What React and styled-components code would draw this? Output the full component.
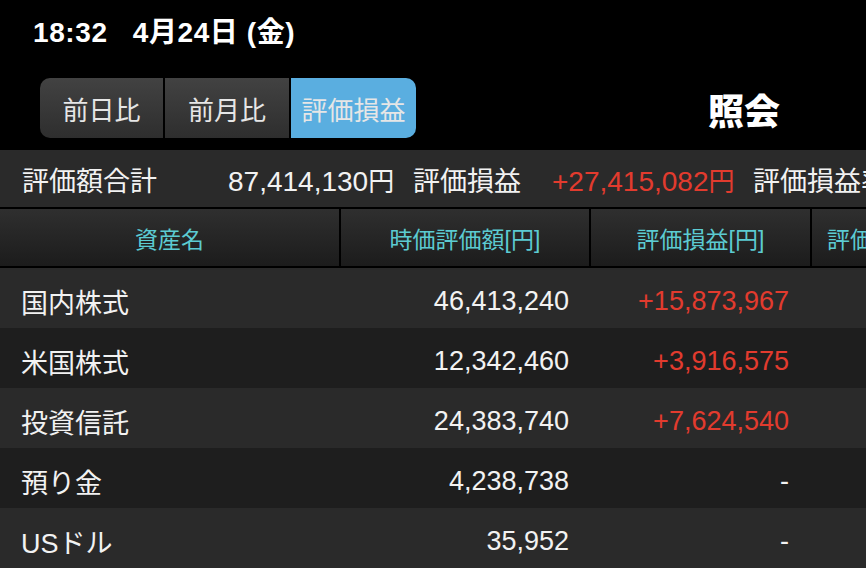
import React from 'react';
import styled, { createGlobalStyle } from 'styled-components';

const GlobalStyle = createGlobalStyle`
  html, body {
    margin: 0;
    padding: 0;
    background: #000;
  }
  body {
    font-family: "Liberation Sans", "Noto Sans CJK JP", sans-serif;
    width: 866px;
    height: 568px;
    overflow: hidden;
  }
`;

const Screen = styled.div`
  width: 866px;
  height: 568px;
  background: #000;
  overflow: hidden;
  display: flex;
  flex-direction: column;
`;

const TopBar = styled.div`
  height: 150px;
  box-sizing: border-box;
  padding: 15px 0 0 33px;
  display: flex;
  flex-direction: column;
`;

const Clock = styled.div`
  color: #fff;
  font-weight: bold;
  font-size: 28px;
  line-height: 36px;
  letter-spacing: 0.6px;
  white-space: pre;
`;

const NavRow = styled.div`
  display: flex;
  align-items: center;
  margin-top: 27px;
  margin-left: 7px;
`;

const Segmented = styled.div`
  display: flex;
  height: 60px;
  border-radius: 10px;
  overflow: hidden;
  gap: 2px;
  background: #000;
`;

const Segment = styled.div`
  width: ${({ $w }) => $w}px;
  display: flex;
  align-items: center;
  justify-content: center;
  font-family: "Noto Sans CJK JP", sans-serif;
  font-size: 26px;
  color: #e6e6e6;
  background: ${({ $active }) =>
    $active ? '#5aaee0' : 'linear-gradient(#424242, #2e2e2e)'};
`;

const Title = styled.div`
  margin-left: auto;
  margin-right: 86px;
  color: #fff;
  font-family: "Noto Sans CJK JP", sans-serif;
  font-weight: 900;
  font-size: 36px;
  line-height: 44px;
  padding-top: 2px;
`;

const Summary = styled.div`
  height: 58px;
  margin-top: 2px;
  background: #2a2a2a;
  display: flex;
  align-items: center;
  white-space: nowrap;
  font-size: 28px;
  color: #f2f2f2;
  padding-left: 22px;
  padding-top: 3px;
  box-sizing: border-box;
`;

const SumLabel = styled.span`
  font-family: "Noto Sans CJK JP", sans-serif;
  font-size: 27px;
  width: ${({ $w }) => $w}px;
  flex: none;
`;

const SumValue = styled.span`
  color: ${({ $red }) => ($red ? '#e23b2e' : '#f2f2f2')};
  width: ${({ $w }) => $w}px;
  flex: none;
`;

const Yen = styled.span`
  font-family: "Noto Sans CJK JP", sans-serif;
  font-size: 26px;
`;

const HeaderRow = styled.div`
  height: 58px;
  margin-top: 2px;
  display: grid;
  grid-template-columns: 339px 248px 219px 1fr;
  gap: 2px;
  background: #000;
  border-bottom: 2px solid #000;
`;

const HeadCell = styled.div`
  background: linear-gradient(#2f2f2f, #1c1c1c);
  color: #5ccbd2;
  font-family: "Liberation Sans", "Noto Sans CJK JP", sans-serif;
  font-size: 23px;
  display: flex;
  align-items: center;
  justify-content: ${({ $left }) => ($left ? 'flex-start' : 'center')};
  padding-left: ${({ $left }) => ($left ? '15px' : '0')};
  padding-top: 2px;
  white-space: nowrap;
  overflow: hidden;
`;

const Row = styled.div`
  height: 60px;
  flex: none;
  display: grid;
  grid-template-columns: 340px 229px 220px 1fr;
  align-items: center;
  background: ${({ $dark }) => ($dark ? '#1e1e1e' : '#2a2a2a')};
  font-size: 27px;
  color: #f2f2f2;
  padding-top: 6px;
  box-sizing: border-box;
`;

const Name = styled.div`
  padding-left: 21px;
  font-family: "Liberation Sans", "Noto Sans CJK JP", sans-serif;
`;

const Num = styled.div`
  text-align: right;
  color: ${({ $red }) => ($red ? '#e23b2e' : '#f2f2f2')};
`;

const rows = [
  { name: '国内株式', value: '46,413,240', gain: '+15,873,967' },
  { name: '米国株式', value: '12,342,460', gain: '+3,916,575' },
  { name: '投資信託', value: '24,383,740', gain: '+7,624,540' },
  { name: '預り金', value: '4,238,738', gain: '-' },
  { name: 'USドル', value: '35,952', gain: '-' },
];

export default function App() {
  return (
    <>
      <GlobalStyle />
      <Screen>
        <TopBar>
          <Clock>18:32   4月24日 (金)</Clock>
          <NavRow>
            <Segmented>
              <Segment $w={123}>前日比</Segment>
              <Segment $w={124}>前月比</Segment>
              <Segment $w={125} $active>評価損益</Segment>
            </Segmented>
            <Title>照会</Title>
          </NavRow>
        </TopBar>

        <Summary>
          <SumLabel $w={206}>評価額合計</SumLabel>
          <SumValue $w={185}>87,414,130<Yen>円</Yen></SumValue>
          <SumLabel $w={139}>評価損益</SumLabel>
          <SumValue $w={201} $red>+27,415,082<Yen>円</Yen></SumValue>
          <SumLabel>評価損益率</SumLabel>
        </Summary>

        <HeaderRow>
          <HeadCell>資産名</HeadCell>
          <HeadCell>時価評価額[円]</HeadCell>
          <HeadCell>評価損益[円]</HeadCell>
          <HeadCell $left>評価損益率</HeadCell>
        </HeaderRow>

        {rows.map((r, i) => (
          <Row key={r.name} $dark={i % 2 === 1}>
            <Name>{r.name}</Name>
            <Num>{r.value}</Num>
            <Num $red={r.gain !== '-'}>{r.gain}</Num>
            <div />
          </Row>
        ))}
      </Screen>
    </>
  );
}
